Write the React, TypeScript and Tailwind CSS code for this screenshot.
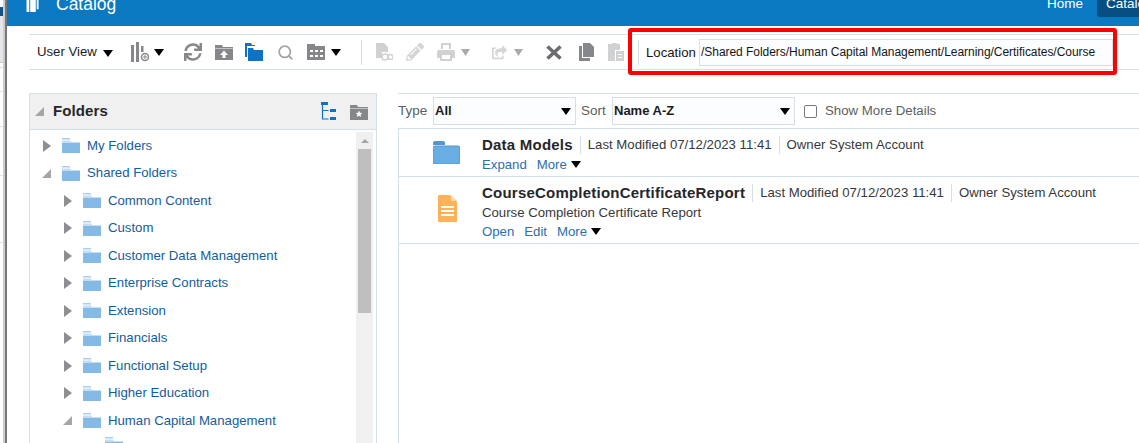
import { FaSync, FaPencilAlt, FaShareSquare } from 'react-icons/fa'
import { Search } from 'lucide-react'

const folders = [
  { name: 'Common Content', open: false },
  { name: 'Custom', open: false },
  { name: 'Customer Data Management', open: false },
  { name: 'Enterprise Contracts', open: false },
  { name: 'Extension', open: false },
  { name: 'Financials', open: false },
  { name: 'Functional Setup', open: false },
  { name: 'Higher Education', open: false },
  { name: 'Human Capital Management', open: true },
]

const Caret = ({ className = '' }: { className?: string }) => (
  <svg viewBox="0 0 10 7" className={`w-[10px] h-[7px] shrink-0 fill-black ${className}`}>
    <path d="M0 0h10L5 7z" />
  </svg>
)

const TreeArrow = ({ open }: { open: boolean }) =>
  open ? (
    <svg viewBox="0 0 9 9" className="w-[9px] h-[9px] fill-[#a3a5a8]">
      <path d="M9 0v9H0z" />
    </svg>
  ) : (
    <svg viewBox="0 0 8 12" className="w-[8px] h-[12px] fill-[#8c8e91]">
      <path d="M0 0l8 6-8 6z" />
    </svg>
  )

const TreeFolder = () => (
  <svg viewBox="0 0 18 15" className="w-[18px] h-[15px] shrink-0">
    <path d="M0 0h8v1.500H0z" fill="#a9cfee" />
    <path d="M0 2.500h8l1 1.500h9v1H0z" fill="#c3def3" />
    <path d="M0 5h18v10H0z" fill="#85bae6" />
  </svg>
)

const FolderGray = ({ star }: { star?: boolean }) => (
  <svg viewBox="0 0 18 16" className="w-[18px] h-[16px] fill-[#85878a]">
    <path d="M0 1h7l1 2h10v13H0z" />
    <path d="M0 4h18v1H0z" fill="#fff" opacity=".5" />
    {star ? (
      <path d="M9 6.500l1 2.200 2.400.3-1.800 1.600.5 2.400L9 11.800 6.900 13l.5-2.400L5.600 9l2.400-.3z" fill="#fff" />
    ) : (
      <path d="M9 6.500l4 4.500h-2.500v3h-3v-3H5z" fill="#fff" />
    )}
  </svg>
)

const Divider = ({ className = '' }: { className?: string }) => (
  <div className={`w-px h-[25px] bg-[#d6dfe6] shrink-0 ${className}`} />
)

const Toolbar = () => (
  <div className="ml-[22px] mt-[8px] h-[36px] border-y border-[#d6dfe6] flex items-center text-[13.200px] text-[#1b1b1b]">
    <span className="ml-[8px] w-[66px] shrink-0 -mt-[1px]">User View</span>
    <Caret className="mt-[2px]" />
    <svg viewBox="0 0 18 20" className="ml-[18px] w-[18px] h-[20px] shrink-0">
      <path d="M0 3h3v17H0zM5 0h3v20H5zM10 4h2.500v6H10z" fill="#85878a" />
      <circle cx="14" cy="15" r="3.500" fill="none" stroke="#85878a" strokeWidth="1.500" />
      <path d="M12 15h4M14 13v4" stroke="#85878a" />
    </svg>
    <Caret className="ml-[5px]" />
    <FaSync className="ml-[20px] text-[18px] text-[#85878a] shrink-0" />
    <div className="ml-[13px] shrink-0 flex">
      <FolderGray />
    </div>
    <svg viewBox="0 0 18 18" className="ml-[12px] w-[18px] h-[18px] shrink-0 fill-[#0f72c5]">
      <path d="M0 0h6l1 2h3v1H2v11H0z" />
      <path d="M3 5h5l1 2h9v11H3z" />
    </svg>
    <Search size={17} strokeWidth={2.500} className="ml-[14px] text-[#a2a4a7] shrink-0" />
    <svg viewBox="0 0 18 16" className="ml-[13px] w-[18px] h-[16px] shrink-0 fill-[#85878a]">
      <path d="M1 0h7v2h10v14H0V0z" />
      <path d="M3 6h3v2H3zM8 6h3v2H8zM13 6h3v2h-3zM3 11h3v2H3zM8 11h3v2H8zM13 11h3v2h-3z" fill="#fff" />
    </svg>
    <Caret className="ml-[6px]" />
    <Divider className="ml-[20px]" />
    <svg viewBox="0 0 17 18" className="ml-[14px] w-[17px] h-[18px] shrink-0 fill-[#cfd1d3]">
      <path d="M0 0h8l4 4v5H6v6H0z" />
      <circle cx="9" cy="14" r="3" fill="none" stroke="#cfd1d3" strokeWidth="1.500" />
      <circle cx="14.500" cy="14" r="2.500" fill="none" stroke="#cfd1d3" strokeWidth="1.500" />
    </svg>
    <FaPencilAlt className="ml-[13px] text-[18px] text-[#d4d6d8] shrink-0" />
    <svg viewBox="0 0 18 18" className="ml-[13px] w-[18px] h-[18px] shrink-0 fill-[#cfd1d3]">
      <path d="M4 0h10v6h-2V2H6v4H4zM1 7h16l1 2v6h-3v3H3v-3H0V9zM5 12v4h8v-4z" />
    </svg>
    <svg viewBox="0 0 9 7" className="ml-[6px] w-[9px] h-[7px] shrink-0 fill-[#a8aaad]">
      <path d="M0 0h9L4.500 7z" />
    </svg>
    <FaShareSquare className="ml-[22px] text-[15px] text-[#d4d6d8] shrink-0" />
    <svg viewBox="0 0 9 7" className="ml-[7px] w-[9px] h-[7px] shrink-0 fill-[#a8aaad]">
      <path d="M0 0h9L4.500 7z" />
    </svg>
    <svg viewBox="0 0 16 15" className="ml-[23px] w-[16px] h-[15px] shrink-0 stroke-[#6b6d70] stroke-[3.600]">
      <path d="M1.500 1.500l13 12M14.500 1.500l-13 12" />
    </svg>
    <svg viewBox="0 0 15 18" className="ml-[17px] w-[15px] h-[18px] shrink-0 fill-[#85878a]">
      <path d="M4 0h7l4 4v10H4z" />
      <path d="M0 3h3v12h8v3H0z" />
    </svg>
    <svg viewBox="0 0 16 18" className="ml-[14px] w-[16px] h-[18px] shrink-0 fill-[#cfd1d3]">
      <path d="M0 1h4V0h5v1h3v6H7v11H0z" />
      <path d="M8 8h8v10H8z" />
      <path d="M10 11h4v1h-4zM10 14h4v1h-4z" fill="#fff" />
    </svg>
    <Divider className="ml-[14px]" />
    <span className="ml-[7px] w-[53px] shrink-0 text-[#161616] mt-[2px]">Location</span>
    <div className="w-[414px] h-[27px] border border-[#d6dfe6] bg-[#fcfdfe] flex items-center pl-[1px] text-[12px] text-[#161616] whitespace-nowrap tracking-[-0.04px]">
      /Shared Folders/Human Capital Management/Learning/Certificates/Course
    </div>
  </div>
)

const TreeRow = ({ indent, open, name }: { indent: number; open: boolean; name: string }) => (
  <div className="h-[27.500px] flex items-center whitespace-nowrap" style={{ paddingLeft: indent }}>
    <div className="w-[9px] flex justify-center shrink-0">
      <TreeArrow open={open} />
    </div>
    <div className="ml-[11px] flex">
      <TreeFolder />
    </div>
    <span className="ml-[7px]">{name}</span>
  </div>
)

const FoldersPanel = () => (
  <div className="ml-[22px] w-[348px] h-[350px] shrink-0 border-x border-t border-[#d6dfe6] flex flex-col">
    <div className="h-[36px] shrink-0 bg-[#f0f0f0] border-b border-[#d6dfe6] flex items-center pl-[5px] pr-[8px]">
      <TreeArrow open />
      <span className="ml-[9px] text-[15px] font-bold text-[#26262a] tracking-[0.1px]">Folders</span>
      <svg viewBox="0 0 15 19" className="ml-auto w-[15px] h-[19px] fill-none stroke-[#0f72c5] stroke-[1.200]">
        <path d="M1.500 2v15h6M1.500 8.500h6" />
        <path d="M0 0h7v3H0zM9 7h6v3H9zM9 15h6v3H9z" fill="#0f72c5" stroke="none" />
      </svg>
      <div className="ml-[14px] flex">
        <FolderGray star />
      </div>
    </div>
    <div className="flex flex-1 min-h-0">
      <div className="flex-1 min-w-0 overflow-hidden pt-[2px] text-[13.200px] text-[#145c9e]">
        <TreeRow indent={12} open={false} name="My Folders" />
        <TreeRow indent={12} open name="Shared Folders" />
        {folders.map((f) => (
          <TreeRow key={f.name} indent={33} open={f.open} name={f.name} />
        ))}
        <div className="pl-[75px] pt-[2px]">
          <TreeFolder />
        </div>
      </div>
      <div className="w-[17px] mr-[3px] mt-[2px] bg-[#f0f0f0] flex flex-col items-center shrink-0">
        <svg viewBox="0 0 8 4" className="mt-[7px] w-[8px] h-[4px] fill-[#a3a5a8] shrink-0">
          <path d="M4 0l4 4H0z" />
        </svg>
        <div className="mt-[6px] w-[13px] h-[164px] bg-[#bfbfbf] shrink-0" />
      </div>
    </div>
  </div>
)

const Sep = () => <div className="w-px h-[18px] bg-[#d6dfe6] mx-[7px] shrink-0" />

const FilterBar = () => (
  <div className="h-[36px] border-y border-[#d6dfe6] flex items-center text-[13.500px] text-[#5c5e61] whitespace-nowrap">
    <span className="w-[35px] shrink-0">Type</span>
    <div className="w-[143px] h-[28px] border border-[#d6dfe6] bg-[#fcfdfe] flex items-center justify-between pl-[1px] pr-[4px] text-[#1b1b1b] font-bold text-[13px]">
      All
      <Caret />
    </div>
    <span className="ml-[5px] w-[31px] shrink-0">Sort</span>
    <div className="w-[183px] h-[28px] border border-[#d6dfe6] bg-[#fcfdfe] flex items-center justify-between pl-[1px] pr-[4px] text-[#1b1b1b] font-bold text-[13px]">
      Name A-Z
      <Caret />
    </div>
    <div className="ml-[9px] w-[13px] h-[13px] border border-[#77797c] rounded-[2px] shrink-0" />
    <span className="ml-[8px] text-[13.250px]">Show More Details</span>
  </div>
)

const Links = ({ items }: { items: string[] }) => (
  <div className="flex items-center gap-[10px] text-[#2a6fb0]">
    {items.map((i) => (
      <span key={i}>{i}</span>
    ))}
    <Caret className="-ml-[6px]" />
  </div>
)

const Title = ({ name }: { name: string }) => (
  <div className="flex items-center h-[20px] whitespace-nowrap text-[#36383b]">
    <span className="text-[#26262a] font-bold text-[15px] tracking-[0.22px]">{name}</span>
    <Sep />
    <span>Last Modified 07/12/2023 11:41</span>
    <Sep />
    <span>Owner System Account</span>
  </div>
)

const Results = () => (
  <div className="ml-[21px] flex-1 min-w-0 h-[350px] flex flex-col">
    <FilterBar />
    <div className="flex-1 border-l border-[#d6dfe6] text-[13.200px]">
      <div className="h-[48px] border-b border-[#d6dfe6] flex">
        <div className="w-[83px] shrink-0 pl-[34px] pt-[12px]">
          <svg viewBox="0 0 27 23" className="w-[27px] h-[23px]">
            <path d="M0 2a2 2 0 012-2h8a2 2 0 012 2v2H0z" fill="#4f96d2" />
            <rect y="5" width="27" height="18" rx="2" fill="#68aee3" stroke="#4f96d2" />
          </svg>
        </div>
        <div className="pt-[6px]">
          <Title name="Data Models" />
          <Links items={['Expand', 'More']} />
        </div>
      </div>
      <div className="h-[67px] border-b border-[#d6dfe6] flex">
        <div className="w-[83px] shrink-0 pl-[39px] pt-[18px]">
          <svg viewBox="0 0 19 27" className="w-[19px] h-[27px]">
            <path d="M1 0h11l7 7v19a1 1 0 01-1 1H1a1 1 0 01-1-1V1a1 1 0 011-1z" fill="#fdb159" />
            <path d="M13 0l6 6h-6z" fill="#fed7a6" />
            <path d="M3 11h13v2H3zM3 15h13v2H3zM3 19h13v2H3z" fill="#fff" />
          </svg>
        </div>
        <div className="pt-[6px]">
          <Title name="CourseCompletionCertificateReport" />
          <div className="h-[18px] mt-[1px] flex items-center text-[#36383b]">Course Completion Certificate Report</div>
          <Links items={['Open', 'Edit', 'More']} />
        </div>
      </div>
    </div>
  </div>
)

const SideStrip = () => (
  <div className="w-[7px] shrink-0 flex">
    <div className="w-[3px] flex flex-col">
      <div className="h-[7px] bg-white" />
      <div className="h-[9px] bg-[#14527f]" />
      <div className="h-[47px] bg-[#e4e6ea] border-b border-[#c9cbce]" />
      <div className="h-[5px] border-b border-[#dcdde0]" />
      <div className="h-[24px] border-b border-[#e2e3e6]" />
      <div className="h-[35px] border-b border-[#e2e3e6]" />
      <div className="h-[49px] border-b border-[#e2e3e6]" />
      <div className="h-[67px] border-b border-[#e2e3e6]" />
    </div>
    <div className="w-[2px] bg-[#cccccc]" />
    <div className="w-[2px] bg-[#777777]" />
  </div>
)

const App = () => (
  <div className="relative w-[1139px] h-[443px] overflow-hidden bg-white flex font-['Liberation_Sans',Arial,sans-serif]">
    <SideStrip />
    <div className="flex-1 min-w-0 flex flex-col">
      <div className="h-[26px] shrink-0 bg-[#0b79c2] flex text-white overflow-hidden">
        <svg viewBox="0 0 14 14" className="ml-[19px] w-[14px] h-[13px] shrink-0 fill-white">
          <path d="M0 0h3v13H0zM4 0h6v13H4zM11 0h2v10h-2z" />
        </svg>
        <span className="ml-[16px] -mt-[6px] text-[17.500px] leading-[20px]">Catalog</span>
        <span className="ml-auto -mt-[6px] text-[13.500px] leading-[20px]">Home</span>
        <div className="ml-[14px] w-[42px] h-[17px] bg-[#064f80] rounded-bl-[3px] pl-[9px] overflow-hidden">
          <span className="block -mt-[6px] text-[13.500px] leading-[20px]">Catalog</span>
        </div>
      </div>
      <Toolbar />
      <div className="flex mt-[23px] min-h-0">
        <FoldersPanel />
        <Results />
      </div>
    </div>
    <div className="absolute left-[628px] top-[28px] w-[489px] h-[47px] border-[4px] border-[#ff0000] rounded-[3px]" />
  </div>
)

export default App
